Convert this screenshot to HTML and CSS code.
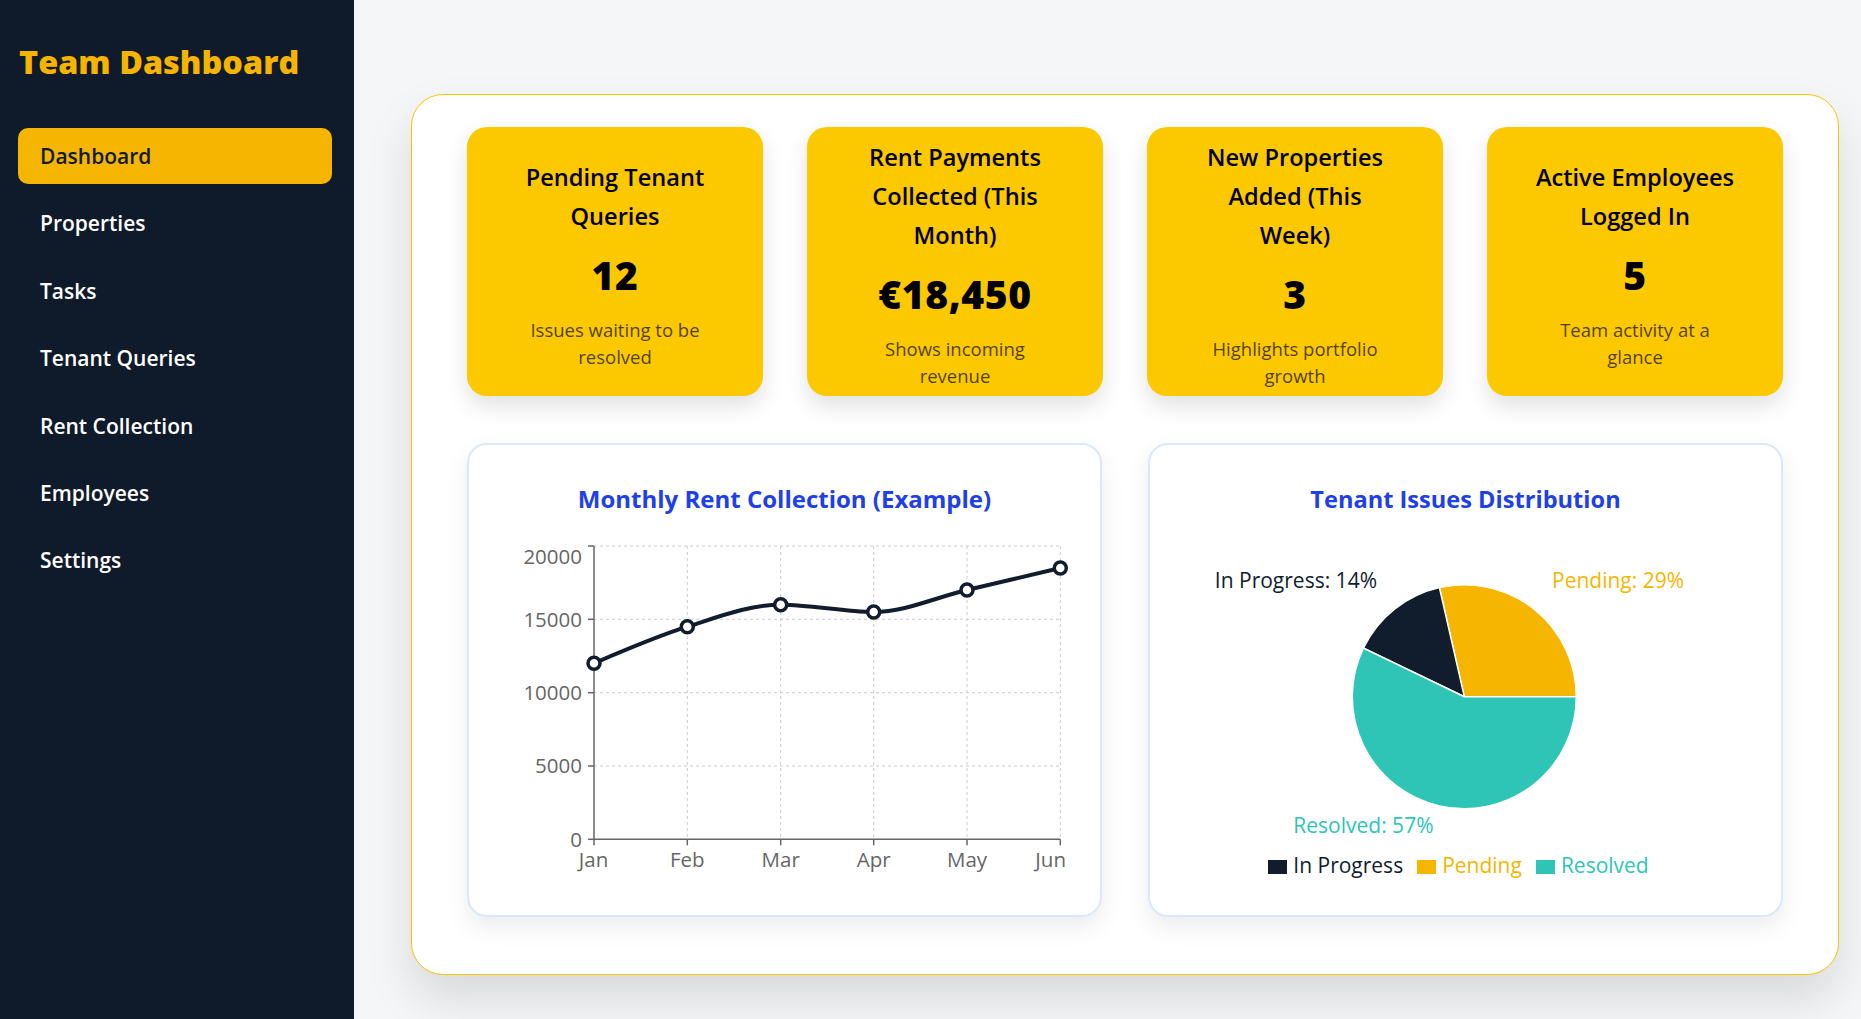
FILE: index.html
```html
<!DOCTYPE html>
<html lang="en">
<head>
<meta charset="utf-8">
<title>Team Dashboard</title>
<link rel="stylesheet" href="styles.css">
</head>
<body>
<div class="app">
  <aside class="sidebar">
    <h1 class="brand">Team Dashboard</h1>
    <nav class="nav">
      <a class="nav-item active" href="#">Dashboard</a>
      <a class="nav-item" href="#">Properties</a>
      <a class="nav-item" href="#">Tasks</a>
      <a class="nav-item" href="#">Tenant Queries</a>
      <a class="nav-item" href="#">Rent Collection</a>
      <a class="nav-item" href="#">Employees</a>
      <a class="nav-item" href="#">Settings</a>
    </nav>
  </aside>
  <main class="main">
    <section class="panel">
      <div class="stats">
        <div class="stat">
          <h3 class="stat-title">Pending Tenant<br>Queries</h3>
          <p class="stat-value">12</p>
          <p class="stat-note">Issues waiting to be<br>resolved</p>
        </div>
        <div class="stat">
          <h3 class="stat-title">Rent Payments<br>Collected (This<br>Month)</h3>
          <p class="stat-value">€18,450</p>
          <p class="stat-note">Shows incoming<br>revenue</p>
        </div>
        <div class="stat">
          <h3 class="stat-title">New Properties<br>Added (This<br>Week)</h3>
          <p class="stat-value">3</p>
          <p class="stat-note">Highlights portfolio<br>growth</p>
        </div>
        <div class="stat">
          <h3 class="stat-title">Active Employees<br>Logged In</h3>
          <p class="stat-value">5</p>
          <p class="stat-note">Team activity at a<br>glance</p>
        </div>
      </div>
      <div class="charts">
        <div class="chart-card">
          <h2 class="chart-title">Monthly Rent Collection (Example)</h2>
          <svg class="chart-svg" width="631" height="360" viewBox="469 530 631 360">
            <g class="grid">
              <line x1="594" y1="546" x2="1060.3" y2="546"/>
              <line x1="594" y1="619.3" x2="1060.3" y2="619.3"/>
              <line x1="594" y1="692.7" x2="1060.3" y2="692.7"/>
              <line x1="594" y1="766" x2="1060.3" y2="766"/>
              <line x1="687.3" y1="546" x2="687.3" y2="839.3"/>
              <line x1="780.7" y1="546" x2="780.7" y2="839.3"/>
              <line x1="873.7" y1="546" x2="873.7" y2="839.3"/>
              <line x1="967" y1="546" x2="967" y2="839.3"/>
              <line x1="1060.3" y1="546" x2="1060.3" y2="839.3"/>
            </g>
            <g class="axis">
              <line x1="594" y1="546" x2="594" y2="839.3"/>
              <line x1="594" y1="839.3" x2="1060.3" y2="839.3"/>
              <line x1="588" y1="546" x2="594" y2="546"/>
              <line x1="588" y1="619.3" x2="594" y2="619.3"/>
              <line x1="588" y1="692.7" x2="594" y2="692.7"/>
              <line x1="588" y1="766" x2="594" y2="766"/>
              <line x1="588" y1="839.3" x2="594" y2="839.3"/>
              <line x1="594" y1="839.3" x2="594" y2="845.3"/>
              <line x1="687.3" y1="839.3" x2="687.3" y2="845.3"/>
              <line x1="780.7" y1="839.3" x2="780.7" y2="845.3"/>
              <line x1="873.7" y1="839.3" x2="873.7" y2="845.3"/>
              <line x1="967" y1="839.3" x2="967" y2="845.3"/>
              <line x1="1060.3" y1="839.3" x2="1060.3" y2="845.3"/>
            </g>
            <g class="tick">
              <text x="582" y="563.5" text-anchor="end">20000</text>
              <text x="582" y="626.5" text-anchor="end">15000</text>
              <text x="582" y="700" text-anchor="end">10000</text>
              <text x="582" y="773.2" text-anchor="end">5000</text>
              <text x="582" y="846.5" text-anchor="end">0</text>
              <text x="593.5" y="867" text-anchor="middle">Jan</text>
              <text x="687.3" y="867" text-anchor="middle">Feb</text>
              <text x="780.7" y="867" text-anchor="middle">Mar</text>
              <text x="873.7" y="867" text-anchor="middle">Apr</text>
              <text x="967" y="867" text-anchor="middle">May</text>
              <text x="1066" y="867" text-anchor="end">Jun</text>
            </g>
            <path class="line" d="M594,663.3 C625.1,649.9 656.2,636.5 687.3,626.7 C718.4,616.9 749.6,604.7 780.7,604.7 C811.8,604.7 842.6,612 873.7,612 C904.8,612 935.9,597.3 967,590 C998.1,582.7 1029.2,575.3 1060.3,568"/>
            <g class="dots">
              <circle cx="594" cy="663.3" r="6"/>
              <circle cx="687.3" cy="626.7" r="6"/>
              <circle cx="780.7" cy="604.7" r="6"/>
              <circle cx="873.7" cy="612" r="6"/>
              <circle cx="967" cy="590" r="6"/>
              <circle cx="1060.3" cy="568" r="6"/>
            </g>
          </svg>
        </div>
        <div class="chart-card">
          <h2 class="chart-title compact">Tenant Issues Distribution</h2>
          <svg class="chart-svg" width="631" height="321" viewBox="1150 530 631 321">
            <g class="pie">
              <path class="slice-pending" d="M1464.3,696.7 L1576.3,696.7 A112,112 0 0 0 1439.4,587.5 Z"/>
              <path class="slice-progress" d="M1464.3,696.7 L1439.4,587.5 A112,112 0 0 0 1363.4,648.1 Z"/>
              <path class="slice-resolved" d="M1464.3,696.7 L1363.4,648.1 A112,112 0 1 0 1576.3,696.7 Z"/>
            </g>
            <g class="pie-label">
              <text class="lbl-progress" x="1377" y="588.3" text-anchor="end">In Progress: 14%</text>
              <text class="lbl-pending" x="1552" y="588.3" text-anchor="start">Pending: 29%</text>
              <text class="lbl-resolved" x="1433.5" y="833.3" text-anchor="end">Resolved: 57%</text>
            </g>
          </svg>
          <ul class="legend">
            <li class="legend-item progress"><span class="swatch"></span>In Progress</li>
            <li class="legend-item pending"><span class="swatch"></span>Pending</li>
            <li class="legend-item resolved"><span class="swatch"></span>Resolved</li>
          </ul>
        </div>
      </div>
    </section>
  </main>
</div>
</body>
</html>
```

FILE: styles.css
```css
html, body {
  margin: 0;
  height: 100%;
}

body {
  font-family: "Open Sans", "Noto Sans", sans-serif;
  background: #f5f6f8;
  overflow: hidden;
}

.app {
  display: flex;
  min-height: 100vh;
}

/* Sidebar */
.sidebar {
  width: 354px;
  flex: none;
  box-sizing: border-box;
  background: #0f1b2b;
  padding: 39px 22px 0 18px;
}

.brand {
  margin: 0 0 44px 1px;
  font-size: 32.4px;
  font-weight: 800;
  line-height: 45px;
  color: #f5b400;
  white-space: nowrap;
}

.nav {
  display: flex;
  flex-direction: column;
  gap: 11.4px;
}

.nav-item {
  display: flex;
  align-items: center;
  height: 56px;
  padding: 0 22px;
  border-radius: 10px;
  color: #ffffff;
  font-size: 21px;
  font-weight: 600;
  text-decoration: none;
}

.nav-item.active {
  background: #f6b500;
  color: #0f1b2b;
}

/* Main */
.main {
  flex: 1;
  min-width: 0;
  padding: 94px 22px 0 57px;
}

.panel {
  background: #ffffff;
  border: 1px solid #f8c600;
  border-radius: 32px;
  padding: 32px 55px 57px;
  box-shadow: 0 24px 48px rgba(0, 0, 0, 0.12);
}

.stats {
  display: grid;
  grid-template-columns: repeat(4, 1fr);
  gap: 44px;
}

.stat {
  height: 269px;
  box-sizing: border-box;
  padding: 4px 24px 0;
  background: #fcc800;
  border-radius: 20px;
  display: flex;
  flex-direction: column;
  justify-content: center;
  align-items: center;
  text-align: center;
  box-shadow: 0 10px 22px rgba(0, 0, 0, 0.12);
}

.stat-title {
  margin: 0;
  font-size: 23.6px;
  font-weight: 600;
  line-height: 39px;
  color: #000000;
}

.stat-value {
  margin: 15px 0 17px;
  font-size: 39px;
  font-weight: 800;
  line-height: 48px;
  letter-spacing: 0.6px;
  color: #000000;
}

.stat-note {
  margin: 0;
  font-size: 18.5px;
  line-height: 27px;
  color: rgba(0, 0, 0, 0.7);
}

.charts {
  display: grid;
  grid-template-columns: 1fr 1fr;
  gap: 46px;
  margin-top: 47px;
}

.chart-card {
  height: 474px;
  box-sizing: border-box;
  border: 2px solid #dbe8fc;
  border-radius: 20px;
  background: #ffffff;
  padding-top: 37px;
  box-shadow: 0 10px 24px rgba(0, 0, 0, 0.08);
}

.chart-title {
  margin: 0 0 15px;
  text-align: center;
  font-size: 24px;
  font-weight: 700;
  line-height: 33px;
  color: #1e40e8;
}

.chart-title.compact {
  font-size: 23.6px;
  padding-top: 1px;
  margin-bottom: 14px;
}

.chart-svg {
  display: block;
  overflow: visible;
}

.grid line {
  stroke: #cccccc;
  stroke-width: 1;
  stroke-dasharray: 3 3;
}

.axis line {
  stroke: #666666;
  stroke-width: 1.5;
}

.tick text {
  font-size: 20.5px;
  fill: #666666;
}

.line {
  fill: none;
  stroke: #111c2d;
  stroke-width: 4;
}

.dots circle {
  fill: #ffffff;
  stroke: #111c2d;
  stroke-width: 3.5;
}

.pie path {
  stroke: #ffffff;
  stroke-width: 1.5;
}

.slice-pending { fill: #f6b500; }
.slice-progress { fill: #111c2d; }
.slice-resolved { fill: #2ec5b6; }

.pie-label text {
  font-size: 21px;
}

.lbl-progress { fill: #111c2d; }
.lbl-pending { fill: #f6b500; }
.lbl-resolved { fill: #2ec5b6; }

.legend {
  list-style: none;
  margin: 0;
  padding: 0;
  display: flex;
  justify-content: center;
  font-size: 21px;
  line-height: 28px;
}

.legend-item {
  display: flex;
  align-items: center;
  margin-right: 14px;
}

.swatch {
  width: 19px;
  height: 14px;
  margin: 4px 6px 0 0;
}

.legend-item.progress { color: #111c2d; }
.legend-item.pending { color: #f6b500; }
.legend-item.resolved { color: #2ec5b6; }

.legend-item.progress .swatch { background: #111c2d; }
.legend-item.pending .swatch { background: #f6b500; }
.legend-item.resolved .swatch { background: #2ec5b6; }
```
